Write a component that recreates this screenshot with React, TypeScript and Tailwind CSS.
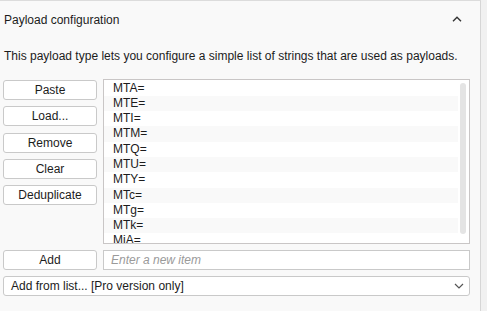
import React from "react";

const items = ["MTA=", "MTE=", "MTI=", "MTM=", "MTQ=", "MTU=", "MTY=", "MTc=", "MTg=", "MTk=", "MiA="];
const buttons = ["Paste", "Load...", "Remove", "Clear", "Deduplicate"];

export default function App() {
  return (
    <div
      className="flex w-[487px] h-[311px] overflow-hidden bg-[#f9f9f9] text-[12px] text-[#1c1c1c]"
      style={{ fontFamily: '"Liberation Sans", Arial, sans-serif' }}
    >
      <div className="w-[481px] h-full border-t border-t-[#dcdcdc] border-r border-r-[#d6d6d6] flex flex-col">
        <div className="h-[37px] flex items-center justify-between pl-[4px] pr-[18px]">
          <span>Payload configuration</span>
          <svg width="10" height="6" viewBox="0 0 10 6" className="mt-[-1px]">
            <path d="M1 5.2 L5 1.2 L9 5.2" fill="none" stroke="#333" strokeWidth="1.4" />
          </svg>
        </div>
        <p className="mt-[9px] h-[18px] leading-[18px] pl-[4px]">
          This payload type lets you configure a simple list of strings that are used as payloads.
        </p>
        <div className="mt-[14px] flex pl-[3px] gap-[6px]">
          <div className="w-[94px] pt-[1px] flex flex-col gap-[6.25px]">
            {buttons.map((b) => (
              <div
                key={b}
                className="h-[20px] bg-white border border-[#c9c9c9] rounded-[3px] flex items-center justify-center"
              >
                {b}
              </div>
            ))}
          </div>
          <div className="relative w-[367px] h-[165px] bg-white border border-[#c9c6c6] overflow-hidden">
            <div className="pt-[0.5px] pr-[11px]">
              {items.map((it, i) => (
                <div
                  key={it}
                  className={`h-[15.3px] leading-[15.3px] pl-[9px] ${i % 2 === 1 ? "bg-[#f9f9f9]" : "bg-white"}`}
                >
                  {it}
                </div>
              ))}
            </div>
            <div className="absolute right-[3px] top-[3px] w-[6px] h-[151px] rounded-[3px] bg-[#e4e4e4]" />
          </div>
        </div>
        <div className="mt-[6px] flex pl-[3px] gap-[6px]">
          <div className="w-[94px] h-[20px] bg-white border border-[#c9c9c9] rounded-[3px] flex items-center justify-center">
            Add
          </div>
          <div className="w-[367px] h-[20px] bg-white border border-[#c9c9c9] flex items-center pl-[7px] italic text-[#9a9a9a]">
            Enter a new item
          </div>
        </div>
        <div className="mt-[6px] ml-[3px] w-[467px] h-[20px] bg-white border border-[#c9c9c9] rounded-[3px] flex items-center justify-between pl-[7px] pr-[5px]">
          <span>Add from list... [Pro version only]</span>
          <svg width="10" height="6" viewBox="0 0 10 6">
            <path d="M1 1 L5 5 L9 1" fill="none" stroke="#555" strokeWidth="1.2" />
          </svg>
        </div>
      </div>
      <div className="flex-1 bg-[#f1f1f1]" />
    </div>
  );
}
